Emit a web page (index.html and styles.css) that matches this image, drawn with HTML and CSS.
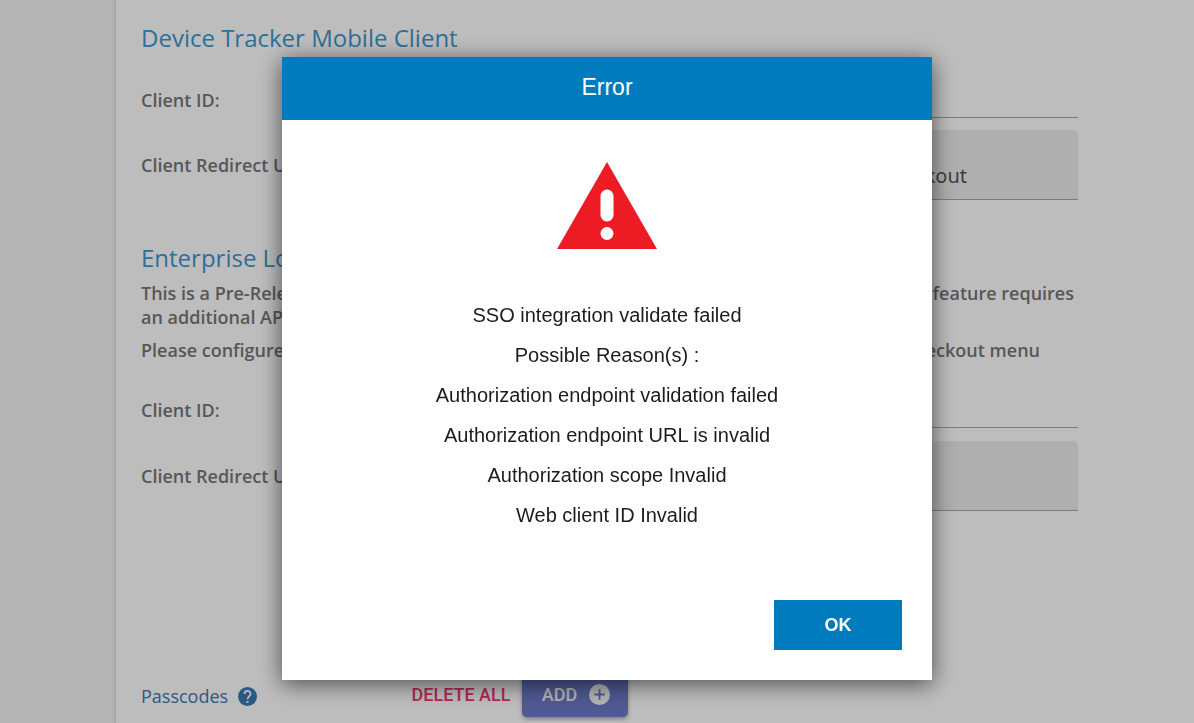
FILE: index.html
```html
<!DOCTYPE html>
<html lang="en">
<head>
<meta charset="utf-8">
<meta name="viewport" content="width=device-width, initial-scale=1">
<title>Error</title>
<link rel="stylesheet" href="styles.css">
</head>
<body>
<div class="page">
  <main class="panel">
    <section class="section">
      <h2 class="heading">Device Tracker Mobile Client</h2>
      <div class="row row-first">
        <label class="label" for="mobile-id">Client ID:</label>
        <input class="field" id="mobile-id" type="text">
      </div>
      <div class="row">
        <label class="label" for="mobile-url">Client Redirect URL:</label>
        <input class="field field-filled" id="mobile-url" type="text" value="checkout" readonly>
      </div>
    </section>
    <section class="section section-login">
      <h2 class="heading">Enterprise Login</h2>
      <p class="note"><span class="line"><span>This is a Pre-Release</span> <span>feature requires</span></span> an additional API</p>
      <p class="note note-short"><span class="line"><span>Please configure</span> <span>checkout menu</span></span></p>
      <div class="row row-first">
        <label class="label" for="login-id">Client ID:</label>
        <input class="field" id="login-id" type="text">
      </div>
      <div class="row">
        <label class="label" for="login-url">Client Redirect URL:</label>
        <input class="field field-filled" id="login-url" type="text" readonly>
      </div>
    </section>
    <section class="passcodes">
      <h3 class="passcodes-title">Passcodes
        <svg class="help" viewBox="0 0 24 24" aria-hidden="true"><path fill="currentColor" d="M12 0a12 12 0 1 0 0 24a12 12 0 0 0 0-24z"/><path fill="none" stroke="#fff" stroke-width="2.2" d="M8.200 8.800c0-5.200 7.600-5.200 7.600 0c0 2.900-3.800 3.200-3.800 6.800"/><path fill="#fff" d="M10.800 17.800h2.400v2.400h-2.400z"/></svg>
      </h3>
      <button class="delete" type="button">DELETE ALL</button>
      <button class="add" type="button">ADD
        <svg class="plus" viewBox="0 0 22 22" aria-hidden="true"><circle cx="11" cy="11" r="11" fill="currentColor"/><path d="M11 5.500v11M5.500 11h11" stroke="#6b78c6" stroke-width="2"/></svg>
      </button>
    </section>
  </main>
</div>
<div class="overlay">
  <div class="dialog" role="alertdialog" aria-modal="true" aria-labelledby="dialog-title">
    <h1 class="dialog-title" id="dialog-title">Error</h1>
    <div class="dialog-body">
      <svg class="warning" viewBox="0 0 100 87" aria-hidden="true"><path fill="#ed1c24" d="M50 0L100 87H0z"/><rect x="43.500" y="27.500" width="13" height="32" rx="6.500" fill="#fff"/><circle cx="50" cy="71.500" r="6.500" fill="#fff"/></svg>
      <div class="messages">
        <p>SSO integration validate failed</p>
        <p>Possible Reason(s) :</p>
        <p>Authorization endpoint validation failed</p>
        <p>Authorization endpoint URL is invalid</p>
        <p>Authorization scope Invalid</p>
        <p>Web client ID Invalid</p>
      </div>
      <button class="ok" type="button">OK</button>
    </div>
  </div>
</div>
</body>
</html>
```
FILE: styles.css
```css
* { box-sizing: border-box; }
body {
  margin: 0;
  height: 100vh;
  overflow: hidden;
  font-family: "Open Sans", "Noto Sans", sans-serif;
  background: #f4f4f4;
}
h1, h2, h3, p { margin: 0; }
button { border: 0; background: none; padding: 0; }
.page { display: flex; min-height: 100vh; padding-left: 115px; }
.panel {
  flex: 1;
  padding: 22px 116px 0 25px;
  background: #fff;
  border-left: 1px solid #dedede;
  box-shadow: 0 0 4px rgba(0, 0, 0, 0.12);
}
.heading { font-size: 24px; line-height: 32px; font-weight: 400; color: #3d97ce; }
.row { display: grid; grid-template-columns: 270px 1fr; align-items: center; }
.row-first { margin: 27px 0 12px; }
.label, .note { font-size: 18px; line-height: 24px; font-weight: 600; color: #767676; white-space: nowrap; }
.field {
  width: 100%;
  height: 37px;
  border: 0;
  border-bottom: 1px solid #a8a8a8;
  outline: 0;
  background: none;
  font: 400 20px "Noto Sans", "Open Sans", sans-serif;
  color: #555;
}
.field-filled {
  height: 70px;
  padding: 22px 111px 0 12px;
  text-align: right;
  background: #ececec;
  border-radius: 5px 5px 0 0;
}
.section-login { margin-top: 42px; }
.note { margin-top: 7px; padding-right: 4px; }
.line { display: flex; justify-content: space-between; }
.note-short { margin-top: 9px; padding-right: 38px; }
.note-short + .row-first { margin: 29px 0 13px; }
.passcodes { display: flex; align-items: center; margin-top: 160px; height: 46px; }
.passcodes-title {
  display: flex;
  align-items: center;
  gap: 10px;
  width: 270px;
  padding-top: 4px;
  font-size: 18px;
  line-height: 24px;
  font-weight: 400;
  color: #3a78b4;
}
.help { width: 19px; height: 19px; }
.delete, .add { font: 500 18px Roboto, sans-serif; white-space: nowrap; }
.delete { width: 100px; color: #ee3770; }
.add {
  display: flex;
  align-items: center;
  justify-content: center;
  gap: 12px;
  width: 106px;
  height: 46px;
  margin-left: 11px;
  padding-left: 2px;
  border-radius: 5px;
  background: #6b78c6;
  color: #f4f4f4;
  box-shadow: 0 2px 4px rgba(0, 0, 0, 0.35);
}
.plus { width: 21px; height: 21px; }
.overlay {
  position: fixed;
  inset: 0;
  display: flex;
  align-items: flex-start;
  justify-content: center;
  padding: 57px 0 0 20px;
  background: rgba(0, 0, 0, 0.26);
  font-family: "Liberation Sans", Arial, sans-serif;
}
.dialog { width: 650px; background: #fff; box-shadow: 0 4px 22px rgba(0, 0, 0, 0.6); }
.dialog-title {
  padding: 14px 0 17px;
  font-size: 23px;
  line-height: 32px;
  font-weight: 400;
  text-align: center;
  color: #fff;
  background: #007bbd;
}
.dialog-body { display: flex; flex-direction: column; align-items: center; padding: 42px 30px 30px; }
.warning { width: 100px; height: 87px; }
.messages { margin-top: 46px; font-size: 20px; line-height: 40px; text-align: center; color: #1c1c1c; }
.ok {
  align-self: flex-end;
  width: 128px;
  height: 50px;
  margin-top: 65px;
  font: 700 18px "Liberation Sans", Arial, sans-serif;
  color: #fff;
  background: #007bbd;
}
```
